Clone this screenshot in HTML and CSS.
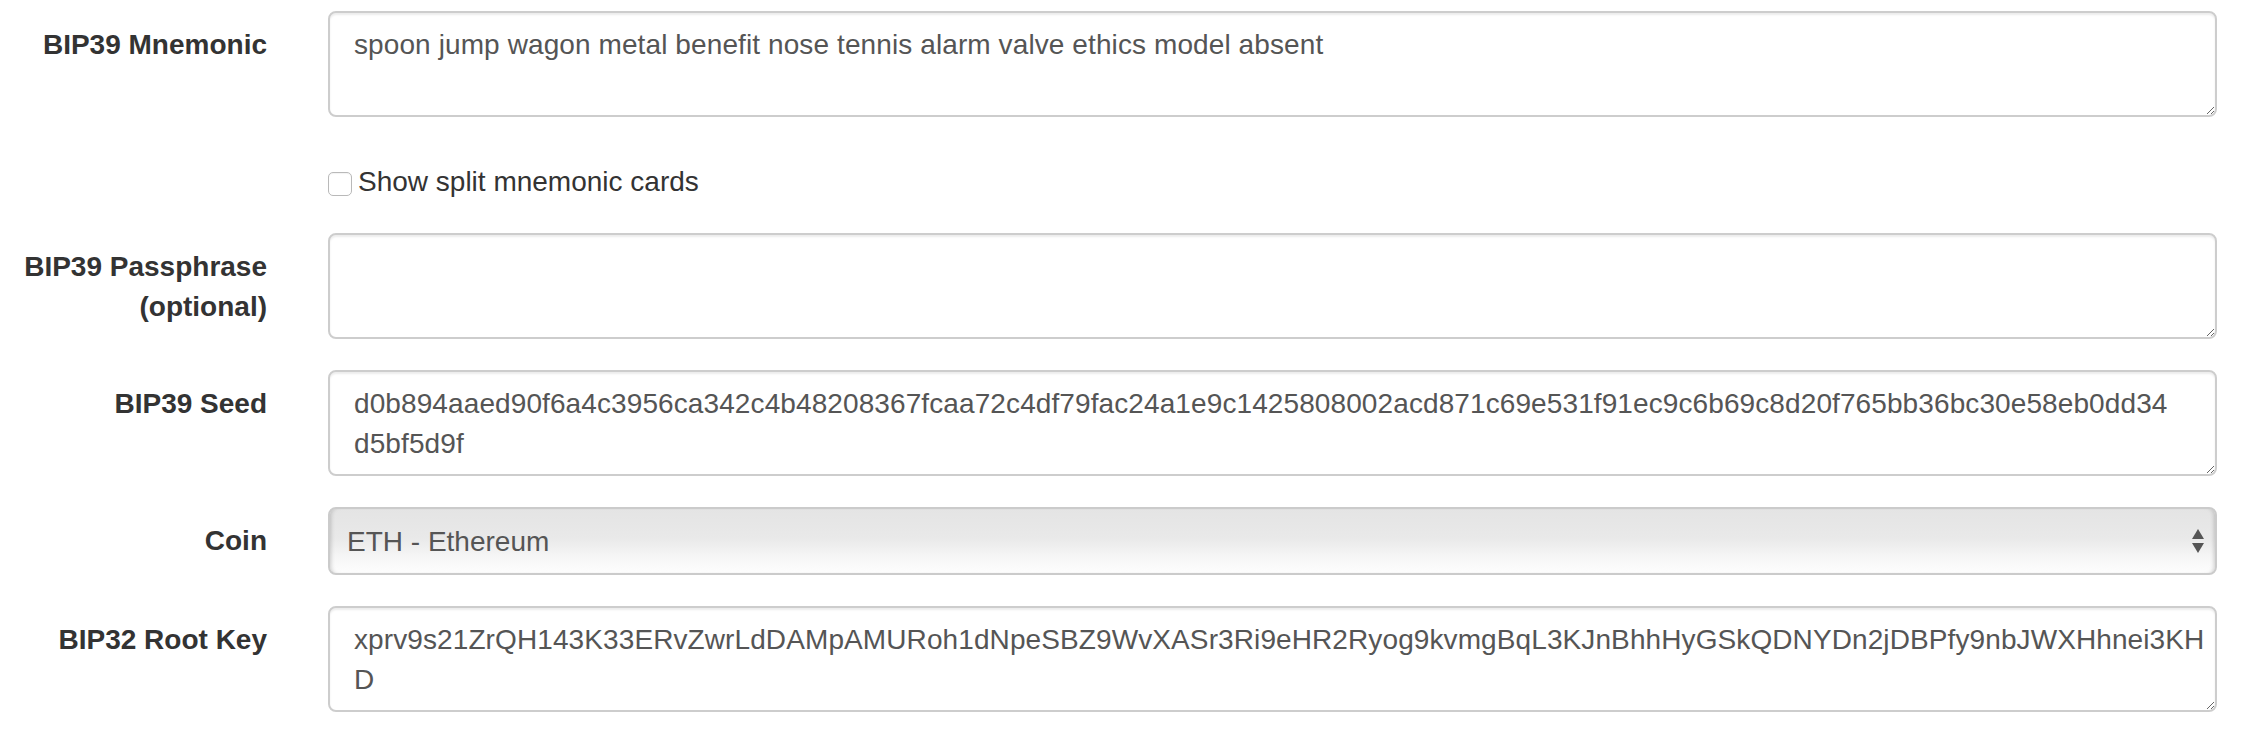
FILE: index.html
```html
<!DOCTYPE html>
<html lang="en">
<head>
<meta charset="utf-8">
<title>BIP39</title>
<link rel="stylesheet" href="styles.css">
</head>
<body>
<form class="form">
  <div class="group">
    <label class="label" for="phrase">BIP39 Mnemonic</label>
    <div class="field">
      <textarea id="phrase" class="control">spoon jump wagon metal benefit nose tennis alarm valve ethics model absent</textarea>
    </div>
  </div>
  <div class="group">
    <div class="label"></div>
    <div class="field check-row">
      <label class="check"><input type="checkbox" class="box"><span>Show split mnemonic cards</span></label>
    </div>
  </div>
  <div class="group">
    <label class="label" for="passphrase">BIP39 Passphrase (optional)</label>
    <div class="field">
      <textarea id="passphrase" class="control"></textarea>
    </div>
  </div>
  <div class="group">
    <label class="label" for="seed">BIP39 Seed</label>
    <div class="field">
      <textarea id="seed" class="control" wrap="off">d0b894aaed90f6a4c3956ca342c4b48208367fcaa72c4df79fac24a1e9c1425808002acd871c69e531f91ec9c6b69c8d20f765bb36bc30e58eb0dd34
d5bf5d9f</textarea>
    </div>
  </div>
  <div class="group">
    <label class="label" for="network">Coin</label>
    <div class="field select-wrap">
      <select id="network" class="select">
        <option>ETH - Ethereum</option>
      </select>
      <svg class="arrows" width="12" height="24" viewBox="0 0 12 24" aria-hidden="true">
        <polygon points="6,0 12,10 0,10" fill="#555"/>
        <polygon points="0,14 12,14 6,24" fill="#555"/>
      </svg>
    </div>
  </div>
  <div class="group">
    <label class="label" for="root-key">BIP32 Root Key</label>
    <div class="field">
      <textarea id="root-key" class="control" wrap="off">xprv9s21ZrQH143K33ERvZwrLdDAMpAMURoh1dNpeSBZ9WvXASr3Ri9eHR2Ryog9kvmgBqL3KJnBhhHyGSkQDNYDn2jDBPfy9nbJWXHhnei3KH
D</textarea>
    </div>
  </div>
</form>
</body>
</html>
```
FILE: styles.css
```css
* {
  box-sizing: border-box;
}

html, body {
  margin: 0;
  background: #fff;
}

body {
  font-family: "Liberation Sans", Arial, Helvetica, sans-serif;
  font-size: 28px;
  line-height: 40px;
  color: #333;
  overflow: hidden;
}

.form {
  padding-top: 11px;
}

.group {
  display: grid;
  grid-template-columns: 267px 1889px;
  column-gap: 61px;
  margin-bottom: 31px;
}

.label {
  text-align: right;
  font-weight: bold;
  padding-top: 14px;
}

.field {
  min-width: 0;
}

.control {
  display: block;
  width: 100%;
  height: 106px;
  margin: 0;
  padding: 12px 24px 8px;
  border: 2px solid #cdcdcd;
  border-radius: 8px;
  box-shadow: inset 0 2px 2px rgba(0, 0, 0, 0.075);
  font-family: inherit;
  font-size: 28px;
  line-height: 40px;
  letter-spacing: 0.1px;
  color: #555;
  background: #fff;
  resize: vertical;
  overflow: hidden;
  outline: none;
}

.check-row {
  display: flex;
  height: 54px;
  padding-top: 14px;
}

.check {
  display: flex;
  align-items: center;
  height: 40px;
  gap: 6px;
  font-weight: normal;
  color: #333;
}

.box {
  appearance: none;
  -webkit-appearance: none;
  flex: none;
  width: 24px;
  height: 24px;
  margin: 4px 0 0 0;
  border: 1.5px solid #b9b9b9;
  border-radius: 5px;
  background: #fff;
  box-shadow: inset 0 1px 1px rgba(0, 0, 0, 0.05);
}

.select-wrap {
  position: relative;
}

.select {
  appearance: none;
  -webkit-appearance: none;
  display: block;
  width: 100%;
  height: 68px;
  margin: 0;
  padding: 0 17px;
  border: 2px solid #cbcbcb;
  border-radius: 8px;
  font-family: inherit;
  font-size: 28px;
  color: #555;
  background: linear-gradient(#e4e4e4 0%, #e9e9e9 45%, #f6f6f6 75%, #fdfdfd 100%);
  box-shadow: inset 4px 0 4px -3px rgba(0, 0, 0, 0.18), inset -4px 0 4px -3px rgba(0, 0, 0, 0.18);
  outline: none;
}

.arrows {
  position: absolute;
  right: 13px;
  top: 22px;
}
```
